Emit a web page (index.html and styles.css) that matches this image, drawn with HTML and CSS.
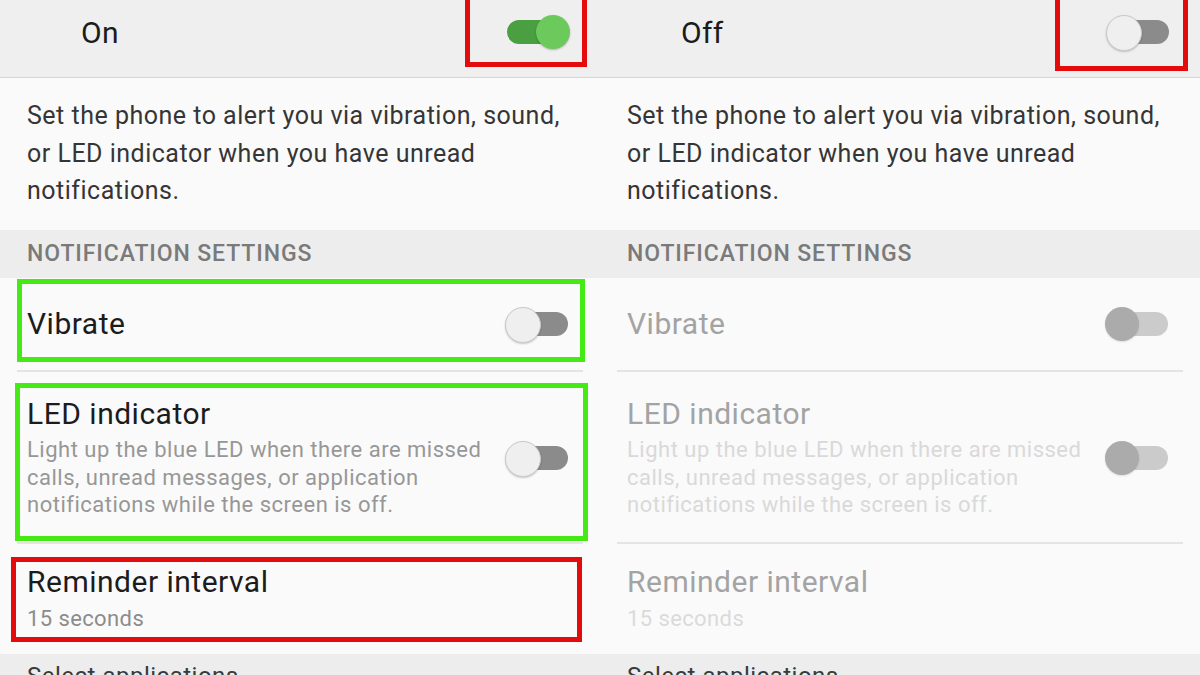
FILE: index.html
```html
<!DOCTYPE html>
<html>
<head>
<meta charset="utf-8">
<link rel="stylesheet" href="styles.css">
</head>
<body>
<div class="screen">
  <section class="panel panel-on">
    <div class="topbar">
      <span class="master-label">On</span>
      <span class="switch switch-on"></span>
    </div>
    <p class="intro">Set the phone to alert you via vibration, sound,<br>or LED indicator when you have unread<br>notifications.</p>
    <div class="section-head">Notification settings</div>
    <div class="row row-vibrate">
      <span class="title">Vibrate</span>
      <span class="switch switch-off"></span>
    </div>
    <div class="divider"></div>
    <div class="row row-led">
      <div class="texts">
        <div class="title">LED indicator</div>
        <div class="summary">Light up the blue LED when there are missed<br>calls, unread messages, or application<br>notifications while the screen is off.</div>
      </div>
      <span class="switch switch-off"></span>
    </div>
    <div class="divider"></div>
    <div class="row row-reminder">
      <div class="texts">
        <div class="title">Reminder interval</div>
        <div class="value">15 seconds</div>
      </div>
    </div>
    <div class="section-head section-foot">Select applications</div>

    <div class="mark mark-red mark-master-on"></div>
    <div class="mark mark-green mark-vibrate"></div>
    <div class="mark mark-green mark-led"></div>
    <div class="mark mark-red mark-reminder"></div>
  </section>

  <section class="panel panel-off">
    <div class="topbar">
      <span class="master-label">Off</span>
      <span class="switch switch-off"></span>
    </div>
    <p class="intro">Set the phone to alert you via vibration, sound,<br>or LED indicator when you have unread<br>notifications.</p>
    <div class="section-head">Notification settings</div>
    <div class="row row-vibrate">
      <span class="title">Vibrate</span>
      <span class="switch switch-disabled"></span>
    </div>
    <div class="divider"></div>
    <div class="row row-led">
      <div class="texts">
        <div class="title">LED indicator</div>
        <div class="summary">Light up the blue LED when there are missed<br>calls, unread messages, or application<br>notifications while the screen is off.</div>
      </div>
      <span class="switch switch-disabled"></span>
    </div>
    <div class="divider"></div>
    <div class="row row-reminder">
      <div class="texts">
        <div class="title">Reminder interval</div>
        <div class="value">15 seconds</div>
      </div>
    </div>
    <div class="section-head section-foot">Select applications</div>

    <div class="mark mark-red mark-master-off"></div>
  </section>
</div>
</body>
</html>
```
FILE: styles.css
```css
* { box-sizing: border-box; }

html, body {
  margin: 0;
  padding: 0;
  width: 1200px;
  height: 675px;
  overflow: hidden;
  background: #fafafa;
  font-family: Roboto, "Noto Sans", "Liberation Sans", sans-serif;
}

.screen {
  display: flex;
  width: 1200px;
  height: 675px;
  overflow: hidden;
}

.panel {
  position: relative;
  width: 600px;
  height: 675px;
  display: flex;
  flex-direction: column;
  background: #fafafa;
}

.topbar {
  height: 78px;
  flex: none;
  display: flex;
  align-items: center;
  justify-content: space-between;
  padding: 0 31px 13px 81px;
  background: #efefef;
  border-bottom: 1px solid #d6d6d6;
}

.master-label {
  font-size: 30px;
  letter-spacing: 0.4px;
  color: #1c1c1c;
}

.intro {
  margin: 0;
  flex: none;
  padding: 19px 27px 20px;
  font-size: 25px;
  letter-spacing: 0.5px;
  line-height: 37.5px;
  color: #353535;
  background: #fafafa;
  white-space: nowrap;
}

.section-head {
  flex: none;
  height: 48px;
  display: flex;
  align-items: center;
  padding-left: 27px;
  background: #ededed;
  font-size: 23px;
  letter-spacing: 0.9px;
  font-weight: 500;
  color: #7a7a7a;
  text-transform: uppercase;
}

.section-foot {
  text-transform: none;
  height: auto;
  flex: 1;
  align-items: flex-start;
  padding-top: 8px;
  font-size: 24px;
  letter-spacing: 0.5px;
  font-weight: 400;
  color: #3a3a3a;
}

.row {
  flex: none;
  display: flex;
  align-items: center;
  justify-content: space-between;
  padding: 0 32px 0 27px;
}

.row-vibrate { height: 92px; }

.row-led {
  height: 170px;
  padding-top: 24px;
  padding-bottom: 22px;
}

.row-reminder {
  height: 110px;
  padding-top: 20px;
  padding-bottom: 18px;
  align-items: flex-start;
}

.divider {
  flex: none;
  height: 2px;
  margin: 0 17px;
  background: #e4e4e4;
}

.title {
  font-size: 30px;
  letter-spacing: 0.5px;
  line-height: 36px;
  color: #1c1c1c;
  white-space: nowrap;
}

.summary {
  margin-top: 4px;
  font-size: 22px;
  letter-spacing: 0.5px;
  line-height: 27.5px;
  color: #979797;
  white-space: nowrap;
}

.value {
  font-size: 22px;
  letter-spacing: 0.4px;
  line-height: 30px;
  margin-top: 4px;
  color: #8c8c8c;
}

.panel-off .row .title { color: #a3a3a3; }
.panel-off .summary { color: #d9d9d9; }
.panel-off .value { color: #dadada; }

/* switches */
.switch {
  position: relative;
  flex: none;
  width: 62px;
  height: 24px;
  border-radius: 12px;
}

.switch::after {
  content: "";
  position: absolute;
  top: -5px;
  width: 34px;
  height: 34px;
  border-radius: 50%;
}

.switch-on { background: #4a9f41; }
.switch-on::after {
  right: -1px;
  background: #6cc95c;
  box-shadow: 0 1px 2px rgba(0, 0, 0, 0.25);
}

.switch-off { background: #8b8b8b; }
.switch-off::after {
  left: -1px;
  background: #efefef;
  border: 1px solid #c9c9c9;
  box-shadow: 0 1px 2px rgba(0, 0, 0, 0.2);
}

.switch-disabled { background: #cbcbcb; }
.switch-disabled::after {
  left: -1px;
  background: #ababab;
  box-shadow: 0 1px 2px rgba(0, 0, 0, 0.12);
}

/* annotation boxes drawn over the screenshot */
.mark {
  position: absolute;
  border: 5px solid;
  pointer-events: none;
}
.mark-red { border-color: #e30b0b; }
.mark-green { border-color: #45ea14; }

.mark-master-on { left: 465px; top: -6px; width: 122px; height: 73px; }
.mark-master-off { left: 455px; top: -6px; width: 133px; height: 77px; }
.mark-vibrate { left: 17px; top: 279px; width: 568px; height: 83px; }
.mark-led { left: 15px; top: 383px; width: 573px; height: 158px; }
.mark-reminder { left: 11px; top: 557px; width: 571px; height: 85px; }
```
